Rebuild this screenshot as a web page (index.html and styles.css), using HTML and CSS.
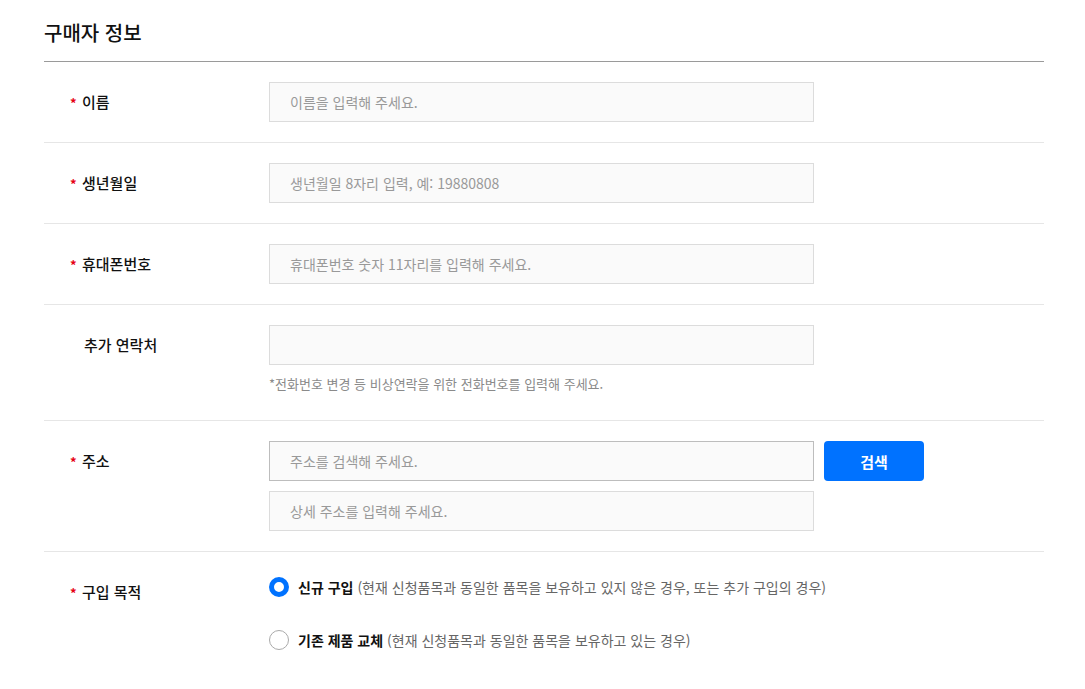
FILE: index.html
```html
<!DOCTYPE html>
<html lang="ko">
<head>
<meta charset="utf-8">
<title>구매자 정보</title>
<link rel="stylesheet" href="styles.css">
</head>
<body>
<section class="buyer">
  <h2 class="title">구매자 정보</h2>
  <div class="form">
    <div class="row">
      <div class="label req">이름</div>
      <div class="field"><input class="input" type="text" placeholder="이름을 입력해 주세요."></div>
    </div>
    <div class="row">
      <div class="label req">생년월일</div>
      <div class="field"><input class="input" type="text" placeholder="생년월일 8자리 입력, 예: 19880808"></div>
    </div>
    <div class="row">
      <div class="label req">휴대폰번호</div>
      <div class="field"><input class="input" type="text" placeholder="휴대폰번호 숫자 11자리를 입력해 주세요."></div>
    </div>
    <div class="row row-extra">
      <div class="label">추가 연락처</div>
      <div class="field">
        <input class="input" type="text">
        <p class="help">*전화번호 변경 등 비상연락을 위한 전화번호를 입력해 주세요.</p>
      </div>
    </div>
    <div class="row">
      <div class="label req">주소</div>
      <div class="field field-stack">
        <div class="addr-line">
          <input class="input input-search" type="text" placeholder="주소를 검색해 주세요.">
          <button class="btn" type="button">검색</button>
        </div>
        <input class="input" type="text" placeholder="상세 주소를 입력해 주세요.">
      </div>
    </div>
    <div class="row row-last">
      <div class="label req">구입 목적</div>
      <div class="field options">
        <label class="opt">
          <span class="radio checked"></span>
          <span class="opt-text"><b>신규 구입</b> <span class="desc">(현재 신청품목과 동일한 품목을 보유하고 있지 않은 경우, 또는 추가 구입의 경우)</span></span>
        </label>
        <label class="opt">
          <span class="radio"></span>
          <span class="opt-text"><b>기존 제품 교체</b> <span class="desc">(현재 신청품목과 동일한 품목을 보유하고 있는 경우)</span></span>
        </label>
      </div>
    </div>
  </div>
</section>
</body>
</html>
```

FILE: styles.css
```css
* { box-sizing: border-box; }
html, body { margin: 0; padding: 0; background: #fff; }
body {
  font-family: "Noto Sans CJK KR", "Noto Sans", sans-serif;
  color: #111;
}
.buyer {
  width: 1000px;
  margin-left: 44px;
}
.title {
  margin: 0;
  height: 62px;
  padding-top: 18px;
  font-size: 20px;
  font-weight: 500;
  line-height: 30px;
  border-bottom: 1px solid #9a9a9a;
}
.row {
  display: flex;
  align-items: flex-start;
  padding: 20px 0;
  border-bottom: 1px solid #e6e6e6;
}
.row-last { border-bottom: none; }
.label {
  width: 225px;
  height: 40px;
  flex: none;
  padding-left: 40px;
  font-size: 15px;
  font-weight: 500;
  line-height: 40px;
  color: #111;
}
.label.req { padding-left: 26px; }
.label.req::before {
  content: "*";
  display: inline-block;
  width: 12px;
  height: 40px;
  vertical-align: top;
  color: #e60012;
  font-size: 13px;
  font-weight: 700;
  line-height: 42px;
}
.field { flex: 1; }
.input {
  display: block;
  width: 545px;
  height: 40px;
  padding: 0 20px;
  border: 1px solid #dcdcdc;
  background: #fafafa;
  font-family: inherit;
  font-size: 14px;
  color: #333;
  outline: none;
}
.input::placeholder { color: #999; }
.input-search { border-color: #bdbdbd; }
.help {
  margin: 9px 0 6px 0;
  font-size: 13px;
  line-height: 20px;
  color: #8a8a8a;
}
.field-stack {
  display: flex;
  flex-direction: column;
  gap: 10px;
}
.addr-line {
  display: flex;
  gap: 10px;
}
.btn {
  width: 100px;
  height: 40px;
  border: none;
  border-radius: 4px;
  background: #0072ff;
  color: #fff;
  font-family: inherit;
  font-size: 15px;
  font-weight: 700;
  cursor: pointer;
}
.options {
  display: flex;
  flex-direction: column;
  gap: 23px;
}
.opt {
  display: flex;
  align-items: center;
  gap: 9px;
  height: 30px;
  font-size: 14px;
}
.radio {
  flex: none;
  width: 20px;
  height: 20px;
  border-radius: 50%;
  border: 1px solid #aaa;
  background: #fff;
}
.radio.checked {
  border: 5px solid #0072ff;
}
.opt-text b { font-weight: 700; color: #111; }
.desc { color: #666; }
```
